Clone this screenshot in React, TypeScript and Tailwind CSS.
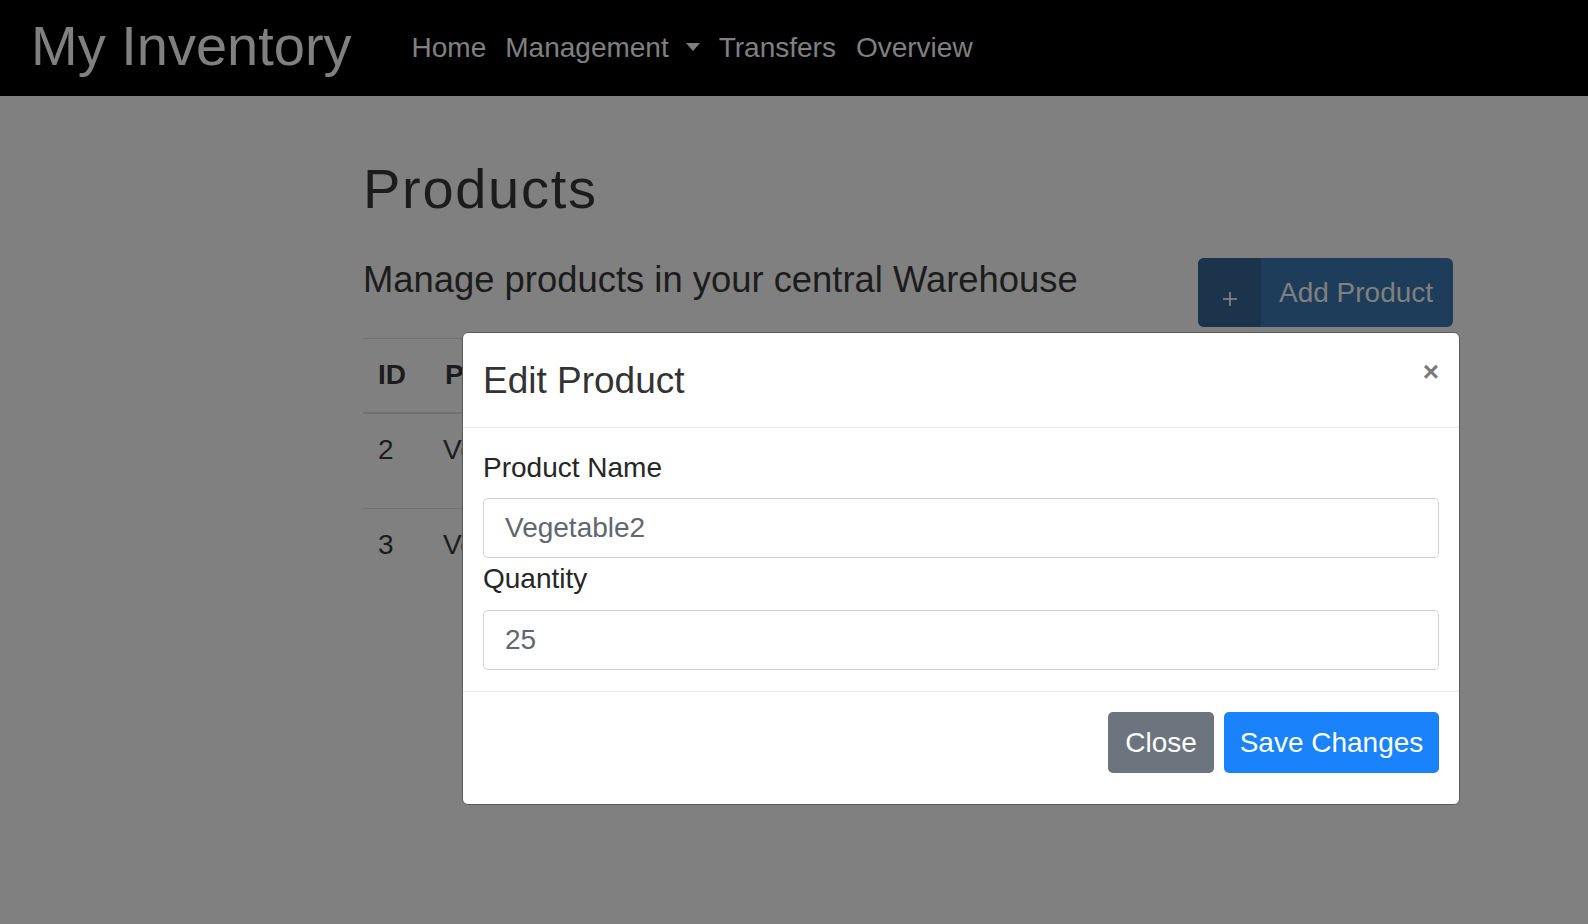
import React from "react";

const font = { fontFamily: '"Liberation Sans", Arial, Helvetica, sans-serif' };

function Navbar() {
  return (
    <nav className="h-[96px] bg-black flex items-center pl-[31px]">
      <div className="text-[56px] leading-[56px] text-[#808080] -mt-[4px]">My Inventory</div>
      <div className="flex items-center ml-[60px] text-[28px] leading-[28px] text-[#808080]">
        <span>Home</span>
        <span className="ml-[19px]">Management</span>
        <svg className="ml-[17px] mt-[-2px]" width="14" height="8" viewBox="0 0 14 8">
          <path d="M0 0 L14 0 L7 8 Z" fill="#808080" />
        </svg>
        <span className="ml-[19px]">Transfers</span>
        <span className="ml-[20px]">Overview</span>
      </div>
    </nav>
  );
}

function Page() {
  return (
    <div className="ml-[363px] w-[1090px]">
      <h2 className="mt-[59px] text-[56px] leading-[67px] tracking-[1.7px] text-[#1c1c1c] font-medium">Products</h2>
      <div className="mt-[36px] flex items-start justify-between">
        <div className="text-[36.4px] leading-[43px] text-[#1c1c1c]">Manage products in your central Warehouse</div>
        <div className="flex h-[69px] w-[255px] rounded-[6px] bg-[#1e3d5a] overflow-hidden">
          <div className="w-[63px] h-full bg-[#1b344c] flex items-center justify-center">
            <svg className="mt-[12px]" width="14" height="14" viewBox="0 0 14 14">
              <path d="M7 0 V14 M0 7 H14" stroke="#8a8a8a" strokeWidth="1.6" />
            </svg>
          </div>
          <div className="flex-1 flex items-center pl-[18px] text-[28px] text-[#808080]">Add Product</div>
        </div>
      </div>
      <div className="mt-[11px] w-full border-t border-[#6f7173] text-[28px] leading-[42px] text-[#1c1c1c]">
        <div className="flex h-[75px] border-b-2 border-[#6f7173] font-bold">
          <div className="w-[67px] pl-[15px] pt-[15px]">ID</div>
          <div className="flex-1 pl-[15px] pt-[15px]">Product Name</div>
        </div>
        <div className="flex h-[95px] border-b border-[#6f7173]">
          <div className="w-[67px] pl-[15px] pt-[15px]">2</div>
          <div className="flex-1 pl-[13px] pt-[15px]">Vegetable2</div>
        </div>
        <div className="flex h-[95px]">
          <div className="w-[67px] pl-[15px] pt-[15px]">3</div>
          <div className="flex-1 pl-[13px] pt-[15px]">Vegetable3</div>
        </div>
      </div>
    </div>
  );
}

function Modal() {
  return (
    <div className="absolute left-[462px] top-[332px] w-[998px] h-[473px] bg-white border border-[#5a5a5a] rounded-[6px] flex flex-col">
      <div className="relative h-[95px] flex items-center px-[20px] border-b border-[#e9ecef] shrink-0">
        <div className="text-[37px] leading-[43px] text-[#333333] font-medium">Edit Product</div>
        <div className="absolute right-[20px] top-[21px] text-[28px] leading-[36px] font-bold text-[#7a7a7a]">×</div>
      </div>
      <div className="px-[20px] pt-[19px] pb-[21px] border-b border-[#e9ecef] text-[28px] leading-[42px]">
        <div className="text-[#262626] mb-[9px]">Product Name</div>
        <div className="h-[60px] border border-[#ced4da] rounded-[5px] flex items-center px-[21px] text-[#5f6770]">Vegetable2</div>
        <div className="text-[#262626] mb-[10px]">Quantity</div>
        <div className="h-[60px] border border-[#ced4da] rounded-[5px] flex items-center px-[21px] text-[#5f6770]">25</div>
      </div>
      <div className="flex justify-end gap-[10px] pt-[20px] pr-[20px] text-[28px]">
        <div className="h-[61px] w-[106px] rounded-[5px] bg-[#6c757d] text-white flex items-center justify-center">Close</div>
        <div className="h-[61px] w-[215px] rounded-[5px] bg-[#1a82fb] text-white flex items-center justify-center">Save Changes</div>
      </div>
    </div>
  );
}

export default function App() {
  return (
    <div className="relative w-full h-[924px] bg-[#808080] overflow-hidden" style={font}>
      <Navbar />
      <Page />
      <Modal />
    </div>
  );
}
